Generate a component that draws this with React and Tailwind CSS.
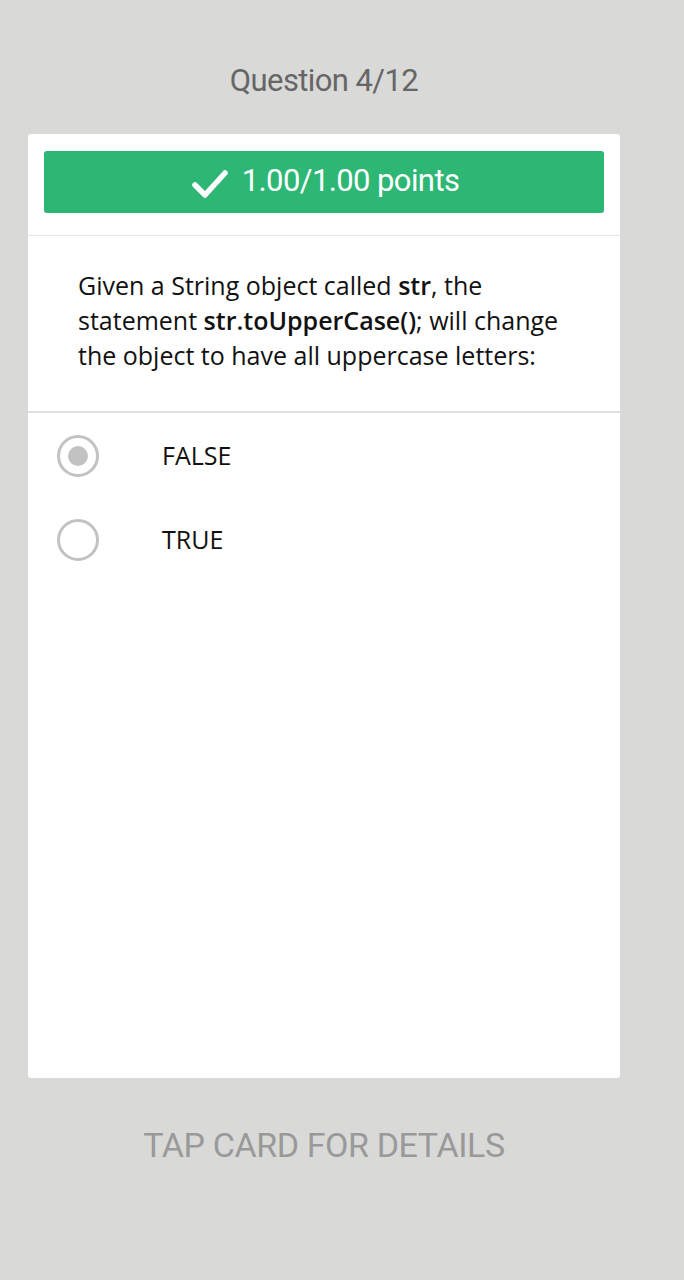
export default function App() {
  return (
    <div className="min-h-[1280px] w-[684px] bg-[#d9d9d8] flex flex-col items-start pl-[28px]">
      <div className="w-[592px] h-[134px] flex items-start justify-center pt-[60px]">
        <span className="text-[31px] leading-[42px] text-[#666666] [font-family:Roboto,sans-serif] tracking-[-0.6px]">Question 4/12</span>
      </div>
      <div className="w-[592px] h-[944px] bg-white rounded-[3px] flex flex-col">
        <div className="px-[16px] pt-[17px] pb-[22px] border-b border-[#e6e6e6]">
          <div className="h-[62px] bg-[#2db674] rounded-[3px] flex items-center justify-center gap-[13px] pb-[3px]">
            <svg width="38" height="32" viewBox="0 0 38 32" className="mt-[7px] ml-[2px]">
              <path d="M4 17 L14 27 L34 5" fill="none" stroke="white" strokeWidth="5.5" strokeLinecap="round" strokeLinejoin="round" />
            </svg>
            <span className="text-[31px] leading-[38px] text-white [font-family:Roboto,sans-serif] tracking-[-0.6px]">1.00/1.00 points</span>
          </div>
        </div>
        <div className="pl-[50px] pr-[24px] pt-[32px] pb-[38px] border-b-2 border-[#e0e0e0]">
          <p className="text-[25px] leading-[35px] text-[#111] [font-family:'Open_Sans',sans-serif]">
            <span>Given a String object called </span>
            <span className="font-semibold">str</span>
            <span>, the statement </span>
            <span className="font-semibold">str.toUpperCase()</span>
            <span>; will change the object to have all uppercase letters:</span>
          </p>
        </div>
        <div className="flex flex-col pt-[1px]">
          {[
            { label: "FALSE", selected: true },
            { label: "TRUE", selected: false },
          ].map((o) => (
            <div key={o.label} className="h-[84px] flex items-center pl-[29px]">
              <div className="w-[42px] h-[42px] rounded-full border-[3px] border-[#c2c2c2] flex items-center justify-center">
                {o.selected && <div className="w-[20px] h-[20px] rounded-full bg-[#c2c2c2]" />}
              </div>
              <span className="ml-[63px] text-[25px] text-[#111] [font-family:'Open_Sans',sans-serif]">{o.label}</span>
            </div>
          ))}
        </div>
      </div>
      <div className="w-[592px] flex justify-center pt-[44px]">
        <span className="text-[34px] leading-[46px] text-[#999999] [font-family:Roboto,sans-serif] tracking-[-0.4px]">TAP CARD FOR DETAILS</span>
      </div>
    </div>
  );
}
